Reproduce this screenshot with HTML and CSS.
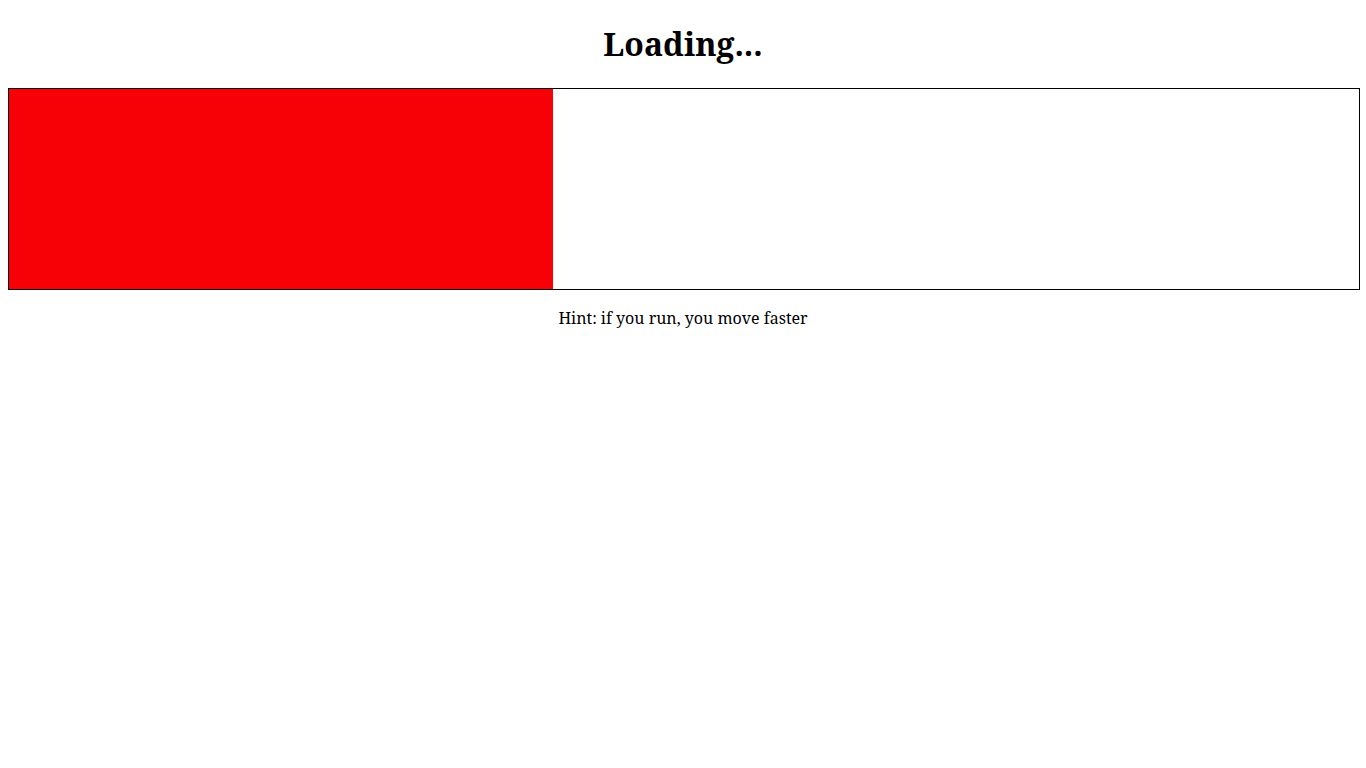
FILE: index.html
```html
<!DOCTYPE html>
<html>
<head>
<meta charset="utf-8">
<link rel="stylesheet" href="styles.css">
</head>
<body>
<h1 class="title">Loading...</h1>
<div class="bar"><div class="fill" style="width: 40.3%"></div></div>
<p class="hint">Hint: if you run, you move faster</p>
</body>
</html>
```
FILE: styles.css
```css
body {
  margin: 8px 6px 8px 8px;
  font-family: "Noto Serif", serif;
  background: #fff;
  color: #000;
}
.title {
  text-align: center;
  font-size: 32px;
  margin: 14px 0 23px;
  padding-right: 2px;
}
.bar {
  border: 1px solid #000;
  height: 200px;
  display: flex;
}
.fill {
  background: #f70006;
  height: 100%;
}
.hint {
  text-align: center;
  font-size: 16px;
  margin: 17px 0;
  padding-right: 2px;
}
```
